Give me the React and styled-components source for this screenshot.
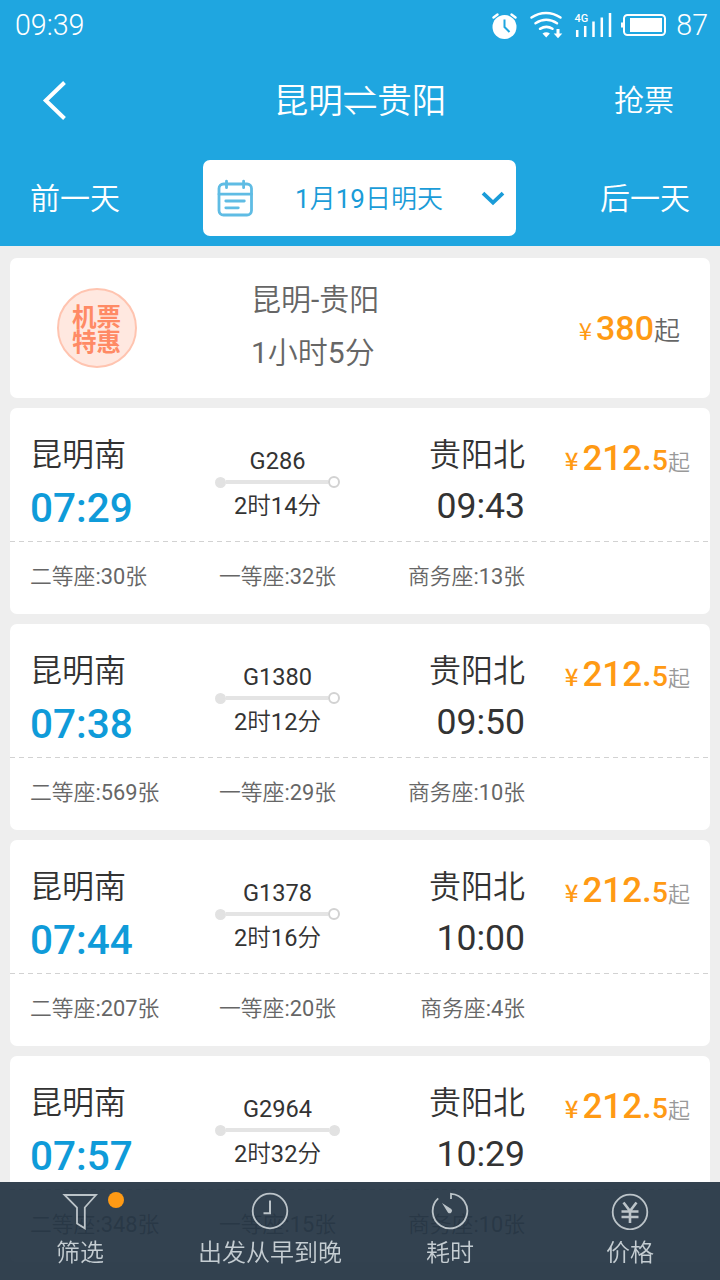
import React from "react";
import styled, { createGlobalStyle } from "styled-components";

const GlobalStyle = createGlobalStyle`
  * {
    box-sizing: border-box;
  }
  body {
    margin: 0;
    background: #eeeeee;
    font-family: Roboto, "Noto Sans CJK SC DemiLight", "Noto Sans CJK SC", sans-serif;
    color: #333333;
  }
`;

const StPage = styled.div`
  width: 720px;
  height: 1280px;
  overflow: hidden;
  background: #eeeeee;
`;

// header
const StHeader = styled.header`
  height: 246px;
  background: #1fa6e0;
  color: white;
`;

const StStatusBar = styled.div`
  display: flex;
  align-items: center;
  justify-content: space-between;
  height: 50px;
  padding: 0 12px 0 15px;
  font-size: 28.6px;
  font-weight: 300;
  line-height: 48px;
  color: white;
`;

const StStatusIcons = styled.div`
  display: flex;
  align-items: center;

  svg {
    display: block;
  }
`;

const StLevel = styled.span`
  margin-left: 9px;
`;

const StTitleBar = styled.div`
  display: grid;
  grid-template-columns: 200px 1fr 200px;
  align-items: center;
  height: 102px;
`;

const StBack = styled.button`
  display: block;
  padding: 0 0 0 42px;
  border: none;
  background: none;
  text-align: left;
  cursor: pointer;

  svg {
    display: block;
  }
`;

const StTitle = styled.h1`
  margin: 0;
  font-size: 34.5px;
  font-weight: 400;
  line-height: 46px;
  text-align: center;
  white-space: nowrap;
`;

const StGrab = styled.span`
  padding-right: 46px;
  font-size: 30px;
  line-height: 40px;
  text-align: right;
`;

const StDateBar = styled.div`
  display: flex;
  align-items: center;
  justify-content: space-between;
  height: 92px;
  padding: 0 30px;
  font-size: 30px;
  line-height: 40px;
`;

const StDay = styled.span`
  padding-top: 2px;
`;

const StDatePicker = styled.div`
  display: flex;
  align-items: center;
  justify-content: space-between;
  width: 313px;
  height: 76px;
  margin-right: 1px;
  padding: 0 11px 0 14px;
  border-radius: 7px;
  background: white;
  color: #1a9cd8;
  font-size: 26px;

  svg {
    display: block;
  }
`;

const StDateText = styled.span`
  padding-top: 2px;
  margin-left: 3px;
`;

// list
const StList = styled.main`
  display: flex;
  flex-direction: column;
  gap: 10px;
  padding: 12px 10px;
`;

const StCard = styled.section`
  flex: none;
  border-radius: 7px;
  background: white;
`;

const StFlight = styled(StCard)`
  display: flex;
  height: 140px;
  padding: 0 30px 0 47px;
`;

const StBadge = styled.div`
  display: flex;
  align-items: center;
  justify-content: center;
  width: 80px;
  height: 80px;
  margin-top: 30px;
  padding-right: 1px;
  border: 2px solid #ffc4b0;
  border-radius: 50%;
  background: #ffe8e0;
  color: #ff8a65;
  font-family: "Noto Sans CJK SC", sans-serif;
  font-size: 24.6px;
  font-weight: 700;
  line-height: 25px;
  text-align: center;
`;

const StFlightInfo = styled.div`
  flex: 1;
  padding: 15px 0 0 114px;
  color: #666666;
  font-size: 30px;
  line-height: 53px;
`;

const StFlightPrice = styled.div`
  padding-top: 46px;
`;

const StPrice = styled.div`
  padding-top: ${(props) => props.$top || 0}px;
  color: #ff9a14;
  font-size: ${(props) => props.$size || 35}px;
  font-weight: 500;
  line-height: 48px;
  text-align: right;
  white-space: nowrap;
`;

const StYen = styled.span`
  margin-right: 4px;
  font-family: "Noto Sans CJK SC", sans-serif;
  font-size: 24px;
  font-weight: ${(props) => props.$weight || 500};
  line-height: 1;
`;

const StDecimal = styled.span`
  font-size: 28.5px;
`;

const StFrom = styled.span`
  color: ${(props) => props.$color || "#999999"};
  font-size: ${(props) => props.$size || 22}px;
  font-weight: ${(props) => props.$weight || 500};
`;

const StTrip = styled.div`
  display: grid;
  grid-template-columns: 185px 125px 185px 1fr;
  height: 133px;
  padding: 24px 20px 0 20px;
`;

const StStation = styled.div`
  margin-bottom: 2px;
  font-size: 32px;
  line-height: 46px;
`;

const StArrive = styled.div`
  text-align: right;
`;

const StStartTime = styled.div`
  color: #0f9bd9;
  font-size: 40.5px;
  font-weight: 500;
  line-height: 56px;
`;

const StEndTime = styled.div`
  font-size: 35.6px;
  line-height: 52px;
`;

const StRoute = styled.div`
  padding-top: 15px;
  font-size: 23.6px;
  line-height: 28px;
  text-align: center;
`;

const StTrack = styled.div`
  display: flex;
  align-items: center;
  height: 12px;
  margin: 1px 0 4px;
`;

const StDot = styled.i`
  width: ${(props) => (props.$open ? 12 : 11)}px;
  height: ${(props) => (props.$open ? 12 : 11)}px;
  border: 2px solid ${(props) => (props.$open ? "#d2d2d2" : "#e2e2e2")};
  border-radius: 50%;
  background: ${(props) => (props.$open ? "white" : "#e2e2e2")};
`;

const StRail = styled.i`
  flex: 1;
  height: 4px;
  background: #e4e4e4;
`;

const StDash = styled.div`
  height: 1px;
  background: repeating-linear-gradient(
    to right,
    #d2d2d2 0 5px,
    transparent 5px 9px
  );
`;

const StSeats = styled.div`
  display: flex;
  align-items: center;
  justify-content: space-between;
  width: 515px;
  height: 72px;
  padding: 0 0 2px 20px;
  color: #666666;
  font-size: 21.8px;
  line-height: 30px;
`;

const StSeat = styled.span`
  width: ${(props) => props.$width || "auto"};
  text-align: ${(props) => props.$align || "left"};
  white-space: nowrap;
`;

// bottom bar, floats over the list
const StTabBar = styled.nav`
  position: fixed;
  left: 0;
  bottom: 0;
  display: grid;
  grid-template-columns: repeat(4, 180px);
  width: 720px;
  height: 98px;
  background: rgba(36, 53, 67, 0.935);
  color: #c5cdd2;
`;

const StTab = styled.div`
  display: flex;
  flex-direction: column;
  align-items: center;
  padding: 10px ${(props) => props.$shift || 0}px 0 0;
  font-size: 24px;
  line-height: 36px;

  svg {
    display: block;
    margin-bottom: 5px;
  }
`;

const StTabIcon = styled.div`
  position: relative;
`;

const StNotice = styled.i`
  position: absolute;
  top: 0;
  left: 47px;
  width: 16px;
  height: 16px;
  border-radius: 50%;
  background: #ff9a14;
`;

function StatusIcons() {
  return (
    <svg width="176" height="50" viewBox="492 0 176 50" fill="none">
      <circle cx="505.5" cy="27" r="12" fill="white" />
      <path d="M505.5 19.5V27l5 5" stroke="#1fa6e0" strokeWidth="2" />
      <path
        d="M494.5 17.5l4-3M516.5 17.5l-4-3"
        stroke="white"
        strokeWidth="2.4"
        strokeLinecap="round"
      />
      <path
        d="M532.5 17.5c9-6 20-6 29 0M536.5 23.3c7-4.6 14.5-4.6 21.5 0M541 28.8c4.5-2.6 8.5-2.6 12.5 0"
        stroke="white"
        strokeWidth="2.5"
        strokeLinecap="round"
      />
      <path d="M543.5 33.5q3.7-2.4 7.4 0l-3.7 4z" fill="white" />
      <path d="M557.5 29h3v4.5h2.8L559 38.2l-4.3-4.7h2.8z" fill="white" />
      <text
        x="575.5"
        y="22.3"
        fill="white"
        fontSize="11"
        fontWeight="500"
        fontFamily="Roboto, sans-serif"
      >
        4G
      </text>
      <path
        d="M578.2 30v7M586.2 26v11M594.5 21.5V37M602.8 17.5V37M611 13v24"
        stroke="white"
        strokeWidth="2.5"
      />
      <rect
        x="625"
        y="15"
        width="41"
        height="20"
        rx="3.5"
        stroke="white"
        strokeWidth="2"
      />
      <path d="M623 22.5v5" stroke="white" strokeWidth="2" />
      <rect x="631" y="18" width="32" height="14" fill="white" />
    </svg>
  );
}

function BackIcon() {
  return (
    <svg width="26" height="40" viewBox="0 0 26 40" fill="none">
      <path d="M22.5 1.5L3.8 19.5l18.7 18" stroke="white" strokeWidth="4" />
    </svg>
  );
}

function CalendarIcon() {
  return (
    <svg width="37" height="38" viewBox="0 0 37 38" fill="none">
      <g stroke="#5fbce4" strokeWidth="2.8" strokeLinecap="round">
        <rect x="2" y="5" width="32.5" height="31" rx="4.5" />
        <path d="M2 15.2h32.5M9.5 2.2v6.5M26.6 2.2v6.5M8.8 22h18.5M8.8 28.8h12.5" />
      </g>
    </svg>
  );
}

function ArrowIcon() {
  return (
    <svg width="24" height="16" viewBox="0 0 24 16" fill="none">
      <path d="M2 3.2l10 9.5 10-9.5" stroke="#1a9cd8" strokeWidth="3.8" />
    </svg>
  );
}

function FilterIcon() {
  return (
    <svg width="38" height="38" viewBox="0 0 38 38" fill="none">
      <path
        d="M3.5 3H35L23.8 15.5v20.8l-7.8-4.8v-16z"
        stroke="#bcc4c9"
        strokeWidth="1.8"
      />
    </svg>
  );
}

function ClockIcon() {
  return (
    <svg width="38" height="38" viewBox="0 0 38 38" fill="none">
      <circle cx="19" cy="19" r="17.3" stroke="#bcc4c9" strokeWidth="1.8" />
      <path d="M19 8.5v12.8h-6.5" stroke="#bcc4c9" strokeWidth="2" />
    </svg>
  );
}

function TimerIcon() {
  return (
    <svg width="38" height="38" viewBox="0 0 38 38" fill="none">
      <path
        d="M20 7V1.8A17.3 17.3 0 1 1 7.2 6.4"
        stroke="#bcc4c9"
        strokeWidth="1.8"
      />
      <path d="M11 11l9.3 6a2.4 2.4 0 1 1-3.4 3.4z" fill="#bcc4c9" />
    </svg>
  );
}

function YenIcon() {
  return (
    <svg width="38" height="38" viewBox="0 0 38 38" fill="none">
      <circle cx="19" cy="20" r="17.3" stroke="#bcc4c9" strokeWidth="1.8" />
      <path
        d="M12.5 10.5L19 19l6.5-8.5M19 19v12M10.5 19.5h17M10.5 25h17"
        stroke="#bcc4c9"
        strokeWidth="2.6"
      />
    </svg>
  );
}

const trains = [
  { no: "G286", start: "07:29", end: "09:43", cost: "2时14分", seats: [30, 32, 13], pass: true },
  { no: "G1380", start: "07:38", end: "09:50", cost: "2时12分", seats: [569, 29, 10], pass: true },
  { no: "G1378", start: "07:44", end: "10:00", cost: "2时16分", seats: [207, 20, 4], pass: true },
  { no: "G2964", start: "07:57", end: "10:29", cost: "2时32分", seats: [348, 15, 10], pass: false },
];

function Train({ value }) {
  return (
    <StCard>
      <StTrip>
        <div>
          <StStation>昆明南</StStation>
          <StStartTime>{value.start}</StStartTime>
        </div>
        <StRoute>
          {value.no}
          <StTrack>
            <StDot />
            <StRail />
            <StDot $open={value.pass} />
          </StTrack>
          {value.cost}
        </StRoute>
        <StArrive>
          <StStation>贵阳北</StStation>
          <StEndTime>{value.end}</StEndTime>
        </StArrive>
        <StPrice $top={3}>
          <StYen>¥</StYen>
          212.<StDecimal>5</StDecimal>
          <StFrom>起</StFrom>
        </StPrice>
      </StTrip>
      <StDash />
      <StSeats>
        <StSeat $width="189px">二等座:{value.seats[0]}张</StSeat>
        <StSeat>一等座:{value.seats[1]}张</StSeat>
        <StSeat $width="189px" $align="right">
          商务座:{value.seats[2]}张
        </StSeat>
      </StSeats>
    </StCard>
  );
}

function App() {
  return (
    <>
      <GlobalStyle />
      <StPage>
        <StHeader>
          <StStatusBar>
            <span>09:39</span>
            <StStatusIcons>
              <StatusIcons />
              <StLevel>87</StLevel>
            </StStatusIcons>
          </StStatusBar>
          <StTitleBar>
            <StBack>
              <BackIcon />
            </StBack>
            <StTitle>昆明⇌贵阳</StTitle>
            <StGrab>抢票</StGrab>
          </StTitleBar>
          <StDateBar>
            <StDay>前一天</StDay>
            <StDatePicker>
              <CalendarIcon />
              <StDateText>1月19日明天</StDateText>
              <ArrowIcon />
            </StDatePicker>
            <StDay>后一天</StDay>
          </StDateBar>
        </StHeader>
        <StList>
          <StFlight>
            <StBadge>
              机票
              <br />
              特惠
            </StBadge>
            <StFlightInfo>
              昆明-贵阳
              <br />
              1小时5分
            </StFlightInfo>
            <StFlightPrice>
              <StPrice $size={34}>
                <StYen $weight={400}>¥</StYen>
                380
                <StFrom $color="#666666" $size={26} $weight={400}>
                  起
                </StFrom>
              </StPrice>
            </StFlightPrice>
          </StFlight>
          {trains.map((value) => {
            return <Train key={value.no} value={value} />;
          })}
        </StList>
        <StTabBar>
          <StTab $shift={20}>
            <StTabIcon>
              <FilterIcon />
              <StNotice />
            </StTabIcon>
            筛选
          </StTab>
          <StTab>
            <ClockIcon />
            出发从早到晚
          </StTab>
          <StTab>
            <TimerIcon />
            耗时
          </StTab>
          <StTab>
            <YenIcon />
            价格
          </StTab>
        </StTabBar>
      </StPage>
    </>
  );
}

export default App;
